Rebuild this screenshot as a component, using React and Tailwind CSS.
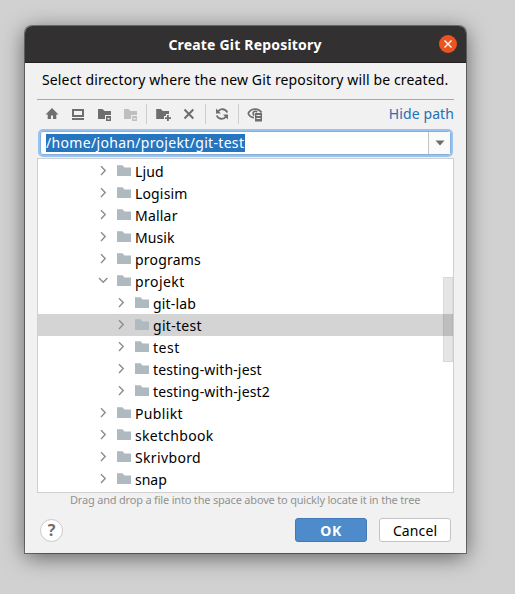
import React from "react";

const rows = [
  { name: "Ljud", depth: 0, tracking: "tracking-[0.15px]" },
  { name: "Logisim", depth: 0, tracking: "tracking-[0.15px]" },
  { name: "Mallar", depth: 0, tracking: "tracking-[0.2px]" },
  { name: "Musik", depth: 0, tracking: "tracking-[0.1px]" },
  { name: "programs", depth: 0, tracking: "tracking-[0.2px]" },
  { name: "projekt", depth: 0, open: true, tracking: "tracking-[0.45px]" },
  { name: "git-lab", depth: 1, tracking: "tracking-[0.15px]" },
  { name: "git-test", depth: 1, selected: true, tracking: "tracking-[0.3px]" },
  { name: "test", depth: 1, tracking: "tracking-[0.5px]" },
  { name: "testing-with-jest", depth: 1, tracking: "tracking-[0.15px]" },
  { name: "testing-with-jest2", depth: 1, tracking: "tracking-[0.15px]" },
  { name: "Publikt", depth: 0, tracking: "tracking-[0.35px]" },
  { name: "sketchbook", depth: 0, tracking: "tracking-[0.3px]" },
  { name: "Skrivbord", depth: 0, tracking: "tracking-[0.35px]" },
  { name: "snap", depth: 0, tracking: "tracking-normal" },
];

function Icon({ children, className = "text-[#6e6e6e]" }) {
  return (
    <svg viewBox="0 0 16 16" className={`size-4 shrink-0 ${className}`} fill="currentColor">
      {children}
    </svg>
  );
}

function Divider() {
  return <div className="h-5 w-px shrink-0 bg-[#cdcdcd]" />;
}

function Toolbar() {
  return (
    <div className="flex h-7 items-center pl-[7px]">
      <Icon>
        <path d="M8 2 1.500 8.500h2.200V13H7V9.500h2V13h3.300V8.500h2.200z" />
      </Icon>
      <div className="w-[10px]" />
      <Icon>
        <path fillRule="evenodd" d="M2 3h12v8H2zM4 5v4h8V5zM2 12h12v2H2z" />
      </Icon>
      <div className="w-[10px]" />
      <Icon>
        <path d="M2 3h4.500l2 2H15v4H9v4H2z" />
        <path fillRule="evenodd" d="M10 10h5v5h-5zM11.500 12v1.500h2V12z" />
      </Icon>
      <div className="w-[10px]" />
      <Icon className="text-[#bfbfbf]">
        <path d="M2 3h4.500l2 2H15v4H9v4H2z" />
        <path fillRule="evenodd" d="M10 10h5v5h-5zM11.500 12v1.500h2V12z" />
      </Icon>
      <div className="w-2" />
      <Divider />
      <div className="w-2" />
      <Icon>
        <path d="M1.200 3h4.600l2 2H14v3h-3v2H9v3H1.200z" />
        <path d="M12 9h1.800v2.200H16V13h-2.200v2H12v-2h-2v-1.800h2z" />
      </Icon>
      <div className="w-[10px]" />
      <Icon>
        <path d="m3.500 3.500 8.800 9M12.300 3.500l-8.800 9" fill="none" stroke="currentColor" strokeWidth="2" />
      </Icon>
      <div className="w-2" />
      <Divider />
      <div className="w-2" />
      <Icon>
        <path d="M13.200 6.500A5.200 5.200 0 0 0 4 5.500M2.800 9.500a5.200 5.200 0 0 0 9.200 1" fill="none" stroke="currentColor" strokeWidth="1.900" />
        <path d="M2 2.500v5h5zM14 13.500v-5H9z" />
      </Icon>
      <div className="w-2" />
      <Divider />
      <div className="w-2" />
      <Icon>
        <path d="M1.200 7.500C3.500 2 11.500 1.700 14.500 6.500M1.200 7.500c1 2.400 3 3.800 5.800 4.100" fill="none" stroke="currentColor" strokeWidth="1.900" />
        <path d="M7.300 9.400A2.200 2.200 0 1 1 10.200 6.300" fill="none" stroke="currentColor" strokeWidth="1.700" />
        <path fillRule="evenodd" d="M8 7h7v8.500H8zM9.500 9v1h4V9zM9.500 12v1h4v-1z" />
      </Icon>
      <span className="ml-auto text-[14px] leading-5 tracking-[0.1px] text-[#2470b3]">Hide path</span>
    </div>
  );
}

function PathField() {
  return (
    <div className="mx-px mt-px flex h-7 overflow-hidden rounded-[5px] border-[2px] border-[#97c3f3] bg-white ring-1 ring-inset ring-[#87afda]">
      <div className="flex flex-1 items-center pl-[6px]">
        <span className="h-[18px] w-[199px] whitespace-nowrap bg-[#2675bf] text-[14px] leading-[18px] tracking-[0.32px] text-white">
          /home/johan/projekt/git-test
        </span>
      </div>
      <div className="my-px mr-px flex w-[22px] items-center justify-center border-l border-[#c4c4c4] bg-[#fafafa]">
        <svg viewBox="0 0 10 6" className="h-[6px] w-[10px] text-[#6e6e6e]">
          <path d="M.5.500h9L5 5.500z" fill="currentColor" />
        </svg>
      </div>
    </div>
  );
}

function TreeRow({ name, depth, open, selected, tracking }) {
  return (
    <div
      className={`flex h-[22px] shrink-0 items-center ${depth ? "pl-[76px]" : "pl-[58px]"} ${selected ? "bg-[#d4d4d4]" : ""}`}
    >
      <svg viewBox="0 0 14 16" className="h-4 w-[14px] text-[#8c8c8c]" fill="none" stroke="currentColor" strokeWidth="1.400">
        {open ? <path d="m3 5 4.200 4.200L11.400 5" /> : <path d="m5 3.300 4.200 4.300L5 11.900" />}
      </svg>
      <svg viewBox="0 0 16 16" className="ml-[6px] size-4 text-[#aeb9c0]" fill="currentColor">
        <path d="M1 2.200h5.500l2 2.200H15V13H1z" />
      </svg>
      <span className={`ml-[3px] whitespace-nowrap pt-px text-[14px] leading-[23px] text-black ${tracking}`}>{name}</span>
    </div>
  );
}

export default function App() {
  return (
    <div className="flex h-[594px] w-[515px] items-start overflow-hidden bg-[#d1d1d1] pl-[25px] pt-[26px] font-['Noto_Sans',sans-serif]">
      <div className="flex h-[527px] w-[441px] flex-col overflow-hidden rounded-t-[7px] bg-[#f1f1f1] shadow-[0_0_0_1px_rgba(0,0,0,0.4),0_4px_22px_rgba(0,0,0,0.55)]">
        <header className="grid h-[37px] shrink-0 grid-cols-[1fr_auto_1fr] items-center border-b border-[#231f20] bg-[#333031] pr-[9px]">
          <span className="col-start-2 pl-2 text-[14px] font-bold tracking-[0.19px] text-white">Create Git Repository</span>
          <span className="flex size-[18px] items-center justify-center justify-self-end rounded-full bg-[#e95420]">
            <svg viewBox="0 0 10 10" className="size-[10px]">
              <path d="m1.500 1.500 7 7m0-7-7 7" stroke="white" strokeWidth="1.300" />
            </svg>
          </span>
        </header>
        <p className="h-[36px] shrink-0 whitespace-nowrap pl-[17px] text-[14px] leading-[34px] tracking-[0.135px] text-black">
          Select directory where the new Git repository will be created.
        </p>
        <div className="ml-3 w-[417px] border-t border-[#a8a8a8]">
          <Toolbar />
          <PathField />
          <div className="relative mt-px flex h-[335px] flex-col overflow-hidden border border-[#cfcfcf] bg-white pt-px">
            {rows.map((row) => (
              <TreeRow key={row.name} {...row} />
            ))}
            <div className="absolute right-0 top-[118px] h-[85px] w-[10px] border border-black/5 bg-black/10" />
          </div>
          <p className="whitespace-nowrap pl-[33px] text-[11px] leading-[14px] tracking-[-0.19px] text-[#919191]">
            Drag and drop a file into the space above to quickly locate it in the tree
          </p>
          <div className="mt-[11px] flex items-center pl-[3px] pr-[3px]">
            <button className="size-[23px] rounded-full border border-[#c9c9c9] bg-white text-[16px] font-bold leading-[21px] text-[#6e6e6e]">?</button>
            <button className="ml-auto h-6 w-[72px] rounded-[3px] border border-[#4279b8] bg-[#4d8bca] text-[14px] font-bold leading-[21px] tracking-[0.5px] text-white">OK</button>
            <button className="ml-3 h-6 w-[72px] rounded-[3px] border border-[#c4c4c4] bg-white text-[14px] leading-[21px] tracking-[0.1px] text-black">Cancel</button>
          </div>
        </div>
      </div>
    </div>
  );
}
